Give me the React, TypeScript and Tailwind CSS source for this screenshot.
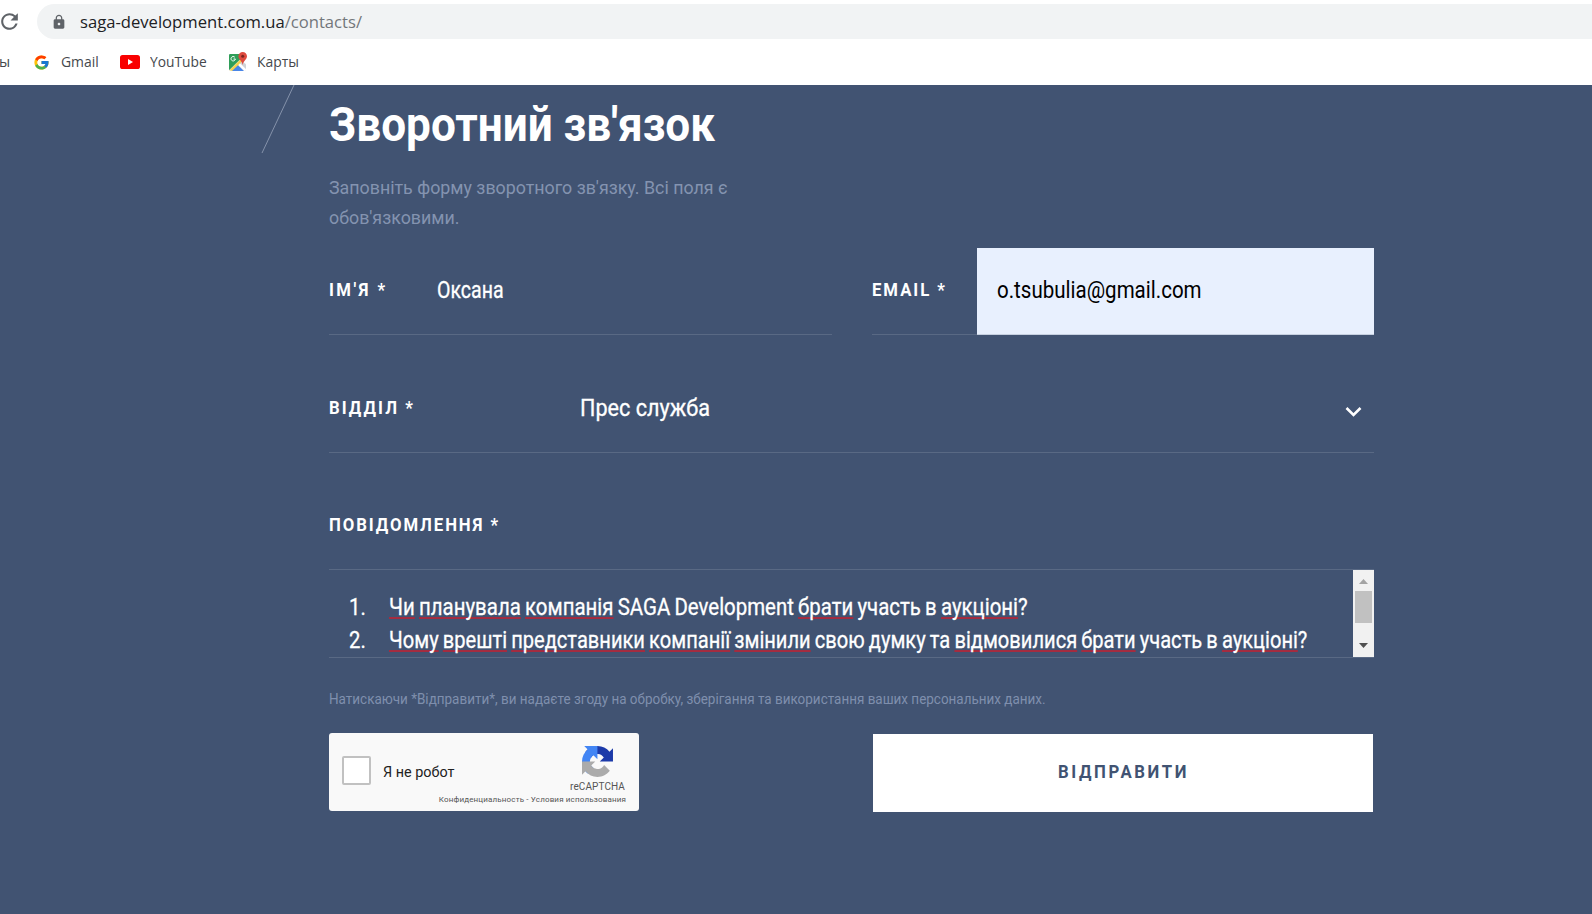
import type { ReactNode } from 'react';
import { FcGoogle } from 'react-icons/fc';
import { MdLock, MdRefresh } from 'react-icons/md';

function YouTubeIcon() {
  return (
    <svg width="20" height="14" viewBox="0 0 20 14">
      <rect width="20" height="14" rx="2.6" fill="#f90000" />
      <path d="M8 4.1v5.8L13 7z" fill="#fff" />
    </svg>
  );
}

function MapsIcon() {
  return (
    <svg width="20" height="20" viewBox="0 0 20 20">
      <path d="M1 3.2Q1 2 2.2 2H12l3 8 3 2v6.8H2.2Q1 18.8 1 17.6z" fill="#dfe1e3" />
      <path d="M1 3.2Q1 2 2.2 2H12.5l.5 4.5L1.3 18Q1 17.5 1 17z" fill="#2f9e58" />
      <path d="M1.5 18.3 13.4 6.6l2 2.2L5 19z" fill="#f7d24a" />
      <path d="M4 19 10 13.2 16 19z" fill="#4a86e8" />
      <path d="M10.3 12.9 12 11.2l6 6.1V18q0 1-1 1h-.5z" fill="#fff" />
      <path d="M12.2 11 14 9.3l4 3.5v4z" fill="#cfd2d5" />
      <path d="M6.8 5.2A2.2 2.2 0 1 0 7.4 7H5.5" fill="none" stroke="#fff" strokeWidth="1" />
      <path d="M14.7 0a4.3 4.3 0 0 1 4.3 4.3c0 3.2-3.3 4-4.3 8.7-1-4.7-4.3-5.5-4.3-8.7A4.3 4.3 0 0 1 14.7 0z" fill="#de4b3f" />
      <circle cx="14.7" cy="4.3" r="1.5" fill="#7c231f" />
    </svg>
  );
}

function RecaptchaLogo() {
  return (
    <svg width="31" height="31" viewBox="0 0 64 64">
      <path fill="#1C3AA9" d="M64 31.955l-.033-1.370V4.687l-7.160 7.160C50.948 4.674 42.033.093 32.050.093c-10.400 0-19.622 4.960-25.458 12.640l11.736 11.860a15.550 15.550 0 0 1 4.754-5.334c2.050-1.600 4.952-2.906 8.968-2.906.485 0 .860.057 1.135.163 4.976.393 9.288 3.140 11.828 7.124l-8.307 8.307L64 31.953" />
      <path fill="#4285F4" d="M31.862.094l-1.370.033H4.594l7.160 7.160C4.580 13.147 0 22.060 0 32.046c0 10.400 4.960 19.622 12.640 25.458L24.500 45.768a15.550 15.550 0 0 1-5.334-4.754c-1.600-2.050-2.906-4.952-2.906-8.968 0-.485.057-.860.163-1.135.393-4.976 3.140-9.288 7.124-11.828l8.307 8.307L31.860.095" />
      <path fill="#ABABAB" d="M.001 32.045l.033 1.370v25.898l7.160-7.160c5.860 7.173 14.774 11.754 24.760 11.754 10.400 0 19.622-4.960 25.458-12.640l-11.736-11.860a15.550 15.550 0 0 1-4.754 5.334c-2.050 1.600-4.952 2.906-8.968 2.906-.485 0-.860-.057-1.135-.163-4.976-.393-9.288-3.140-11.828-7.124l8.307-8.307c-10.522.040-22.400.066-27.295-.005" />
    </svg>
  );
}

function Label({ className, children }: { className: string; children: ReactNode }) {
  return (
    <span className={`block shrink-0 origin-left scale-x-[0.93] text-[18px] leading-6 font-bold whitespace-nowrap ${className}`}>
      {children}
    </span>
  );
}

function Misspelled({ children }: { children: ReactNode }) {
  return (
    <span className="underline decoration-[#a32c40] decoration-2 underline-offset-[2px] [text-decoration-skip-ink:none]">
      {children}
    </span>
  );
}

function BrowserBar() {
  return (
    <header className="h-[85px] overflow-hidden bg-white font-['Open_Sans',sans-serif]">
      <div className="flex h-[39px] items-end">
        <div className="flex h-[35px] w-[37px] shrink-0 items-center">
          <MdRefresh className="-ml-[3px] size-[25px] shrink-0 text-[#5f6368]" />
        </div>
        <div className="flex h-[35px] grow items-center rounded-l-full bg-[#f1f3f4] pl-[14px]">
          <MdLock className="size-[16px] text-[#5f6368]" />
          <span className="ml-[13px] origin-left scale-x-[0.978] text-[17px] leading-6 whitespace-nowrap text-[#202124]">
            saga-development.com.ua<span className="text-[#73777b]">/contacts/</span>
          </span>
        </div>
      </div>
      <nav className="flex h-[46px] items-center text-[14.5px] leading-5 text-[#45484c]">
        <span className="w-[33px] shrink-0 -indent-px">ы</span>
        <span className="flex w-[87px] shrink-0 items-center gap-[11px]">
          <FcGoogle className="size-[17px] shrink-0" />
          <span className="origin-left scale-x-[0.960]">Gmail</span>
        </span>
        <span className="flex w-[108px] shrink-0 items-center gap-[10px]">
          <YouTubeIcon />
          <span className="origin-left scale-x-[0.950]">YouTube</span>
        </span>
        <span className="flex items-center gap-[9px]">
          <MapsIcon />
          <span className="origin-left scale-x-[0.960]">Карты</span>
        </span>
      </nav>
    </header>
  );
}

function Scrollbar() {
  return (
    <div className="flex w-[21px] shrink-0 flex-col items-center bg-[#f1f1f1]">
      <svg width="21" height="21" viewBox="0 0 21 21">
        <path d="M6 14 10.5 9 15 14z" fill="#a3a3a3" />
      </svg>
      <div className="h-[32px] w-[17px] bg-[#c1c1c1]" />
      <svg className="mt-auto" width="21" height="21" viewBox="0 0 21 21">
        <path d="M6 7 10.5 12 15 7z" fill="#505050" />
      </svg>
    </div>
  );
}

function Recaptcha() {
  return (
    <div className="flex h-[78px] w-[310px] rounded-[3px] bg-[#f9f9f9]">
      <div className="mt-[23px] ml-[13px] size-[29px] shrink-0 rounded-[2px] border-2 border-[#c1c1c1] bg-white" />
      <div className="mt-[29px] ml-[12px] w-[54px] shrink-0">
        <span className="block origin-left scale-x-[0.96] text-[15px] leading-5 whitespace-nowrap text-[#222]">
          Я не робот
        </span>
      </div>
      <div className="flex grow flex-col items-end pt-[13px] pr-[13px] text-[#555]">
        <div className="mr-[13px]">
          <RecaptchaLogo />
        </div>
        <span className="mt-[4px] mr-px text-[10px] leading-3 tracking-[0.1px]">reCAPTCHA</span>
        <span className="mt-px text-[8px] leading-3 tracking-[0.16px] whitespace-nowrap">
          Конфиденциальность - Условия использования
        </span>
      </div>
    </div>
  );
}

export default function App() {
  return (
    <div className="h-[914px] w-[1592px] overflow-hidden">
      <BrowserBar />
      <main className="flex h-[829px] bg-[#415372] font-['Roboto',sans-serif] text-white">
        <div className="w-[329px] shrink-0">
          <svg className="ml-[261px]" width="35" height="70" viewBox="0 0 35 70">
            <path d="M33 0 1 68" stroke="#8592aa" strokeWidth="1" />
          </svg>
        </div>
        <form className="w-[1045px] pt-[12px]">
          <h1 className="origin-left scale-x-[0.919] text-[48px] leading-[56px] font-bold whitespace-nowrap">
            Зворотний зв'язок
          </h1>
          <p className="mt-[20px] origin-left scale-x-[0.938] text-[19px] leading-[30px] whitespace-nowrap text-[#8493b0]">
            Заповніть форму зворотного зв'язку. Всі поля є
            <br />
            обов'язковими.
          </p>

          <div className="mt-[15px] flex h-[87px] justify-between">
            <div className="flex w-[503px] items-center border-b border-[#596984]">
              <div className="w-[108px] pb-[2px]">
                <Label className="tracking-[2.6px]">ІМ'Я *</Label>
              </div>
              <span className="origin-left scale-x-[0.85] text-[23px] leading-8 [-webkit-text-stroke:0.3px]">Оксана</span>
            </div>
            <div className="flex w-[502px] items-stretch">
              <div className="flex w-[105px] shrink-0 items-center border-b border-[#596984] pb-[2px]">
                <Label className="tracking-[2.1px]">EMAIL *</Label>
              </div>
              <div className="flex grow items-center border-b border-[#c6d0e0] bg-[#e8f0fe] pl-[20px] text-black">
                <span className="origin-left scale-x-[0.892] text-[23px] leading-8">o.tsubulia@gmail.com</span>
              </div>
            </div>
          </div>

          <div className="mt-[31px] flex h-[87px] items-center border-b border-[#596984]">
            <div className="w-[251px] shrink-0 pb-[2px]">
              <Label className="tracking-[2.2px]">ВІДДІЛ *</Label>
            </div>
            <span className="origin-left scale-x-[0.94] text-[23px] leading-8 [-webkit-text-stroke:0.3px]">Прес служба</span>
            <svg className="mt-[5px] mr-[12px] ml-auto" width="17" height="12" viewBox="0 0 17 12">
              <path d="M1.5 2 8.5 9 15.5 2" fill="none" stroke="#fff" strokeWidth="2.6" />
            </svg>
          </div>

          <div className="mt-[31px] flex h-[86px] items-center border-b border-[#596984] pb-[3px]">
            <Label className="tracking-[2.05px]">ПОВІДОМЛЕННЯ *</Label>
          </div>

          <div className="flex h-[88px] border-b border-[#596984]">
            <ol className="grow overflow-hidden pt-[21px] text-[23px] leading-[33px] whitespace-nowrap [word-spacing:-1px] [-webkit-text-stroke:0.3px]">
              <li className="flex">
                <div className="w-[60px] shrink-0 pl-[20px]">
                  <span className="block origin-left scale-x-[0.880]">1.</span>
                </div>
                <span className="origin-left scale-x-[0.888]">
                  <Misspelled>Чи</Misspelled> <Misspelled>планувала</Misspelled> <Misspelled>компанія</Misspelled> SAGA
                  Development <Misspelled>брати</Misspelled> участь в <Misspelled>аукціоні</Misspelled>?
                </span>
              </li>
              <li className="flex">
                <div className="w-[60px] shrink-0 pl-[20px]">
                  <span className="block origin-left scale-x-[0.880]">2.</span>
                </div>
                <span className="origin-left scale-x-[0.874]">
                  <Misspelled>Чому</Misspelled> <Misspelled>врешті</Misspelled> <Misspelled>представники</Misspelled>{' '}
                  <Misspelled>компанії</Misspelled> <Misspelled>змінили</Misspelled> свою думку та{' '}
                  <Misspelled>відмовилися</Misspelled> <Misspelled>брати</Misspelled> участь в{' '}
                  <Misspelled>аукціоні</Misspelled>?
                </span>
              </li>
            </ol>
            <Scrollbar />
          </div>

          <p className="mt-[31px] origin-left scale-x-[0.898] text-[15px] leading-5 whitespace-nowrap text-[#7f8fad]">
            Натискаючи *Відправити*, ви надаєте згоду на обробку, зберігання та використання ваших персональних даних.
          </p>

          <div className="mt-[24px] flex items-start justify-between pr-px">
            <Recaptcha />
            <button
              type="button"
              className="mt-px flex h-[78px] w-[500px] items-center justify-center bg-white pb-[3px] text-[#415372]"
            >
              <span className="scale-x-[0.930] text-[18px] leading-6 font-bold tracking-[2.8px]">ВІДПРАВИТИ</span>
            </button>
          </div>
        </form>
      </main>
    </div>
  );
}
